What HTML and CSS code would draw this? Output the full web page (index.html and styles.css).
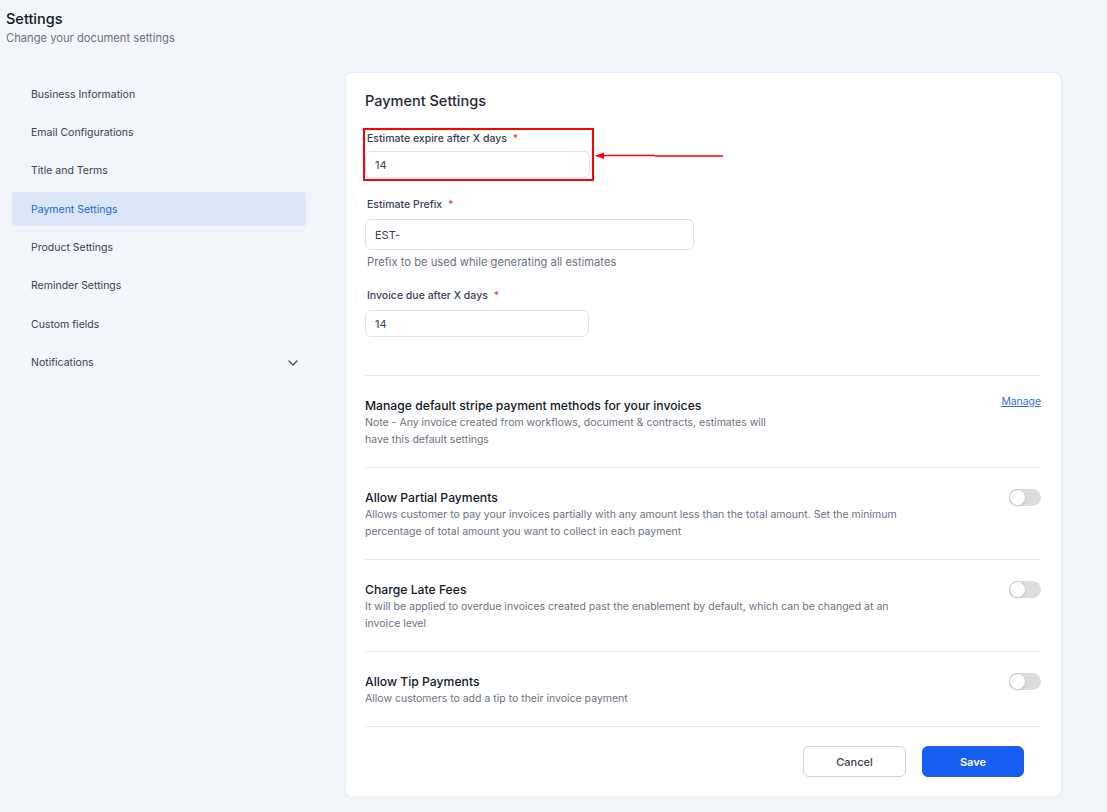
FILE: index.html
```html
<!DOCTYPE html>
<html lang="en">
<head>
  <meta charset="UTF-8" />
  <meta name="viewport" content="width=device-width, initial-scale=1" />
  <title>Settings</title>
  <link rel="stylesheet" href="styles.css">
</head>
<body>
  <header class="page-head">
    <h1>Settings</h1>
    <p>Change your document settings</p>
  </header>

  <div class="layout">
    <nav class="side">
      <a class="side-item">Business Information</a>
      <a class="side-item">Email Configurations</a>
      <a class="side-item">Title and Terms</a>
      <a class="side-item active">Payment Settings</a>
      <a class="side-item">Product Settings</a>
      <a class="side-item">Reminder Settings</a>
      <a class="side-item">Custom fields</a>
      <a class="side-item">Notifications
        <svg class="chev" width="10" height="6" viewBox="0 0 10 6"><path d="M1 1l4 4 4-4" fill="none" stroke="#4b5563" stroke-width="1.4" stroke-linecap="round" stroke-linejoin="round"/></svg>
      </a>
    </nav>

    <main class="card">
      <div class="form">
        <h2>Payment Settings</h2>

        <div class="field marked">
          <label>Estimate expire after X days <span class="req">*</span></label>
          <input class="input in-1" value="14">
          <svg class="arrow" width="130" height="10" viewBox="0 0 130 10"><path d="M8 4.5H60M60 5H128" stroke="#ff0000" stroke-width="1.6"/><path d="M0 4.7L9 1.5V8Z" fill="#ff0000"/></svg>
        </div>

        <div class="field">
          <label>Estimate Prefix <span class="req">*</span></label>
          <input class="input in-2" value="EST-">
          <p class="help">Prefix to be used while generating all estimates</p>
        </div>

        <div class="field">
          <label>Invoice due after X days <span class="req">*</span></label>
          <input class="input in-3" value="14">
        </div>
      </div>

      <section class="row">
        <div class="row-text">
          <h3>Manage default stripe payment methods for your invoices</h3>
          <p class="note">Note - Any invoice created from workflows, document &amp; contracts, estimates will have this default settings</p>
        </div>
        <a class="manage" href="#">Manage</a>
      </section>

      <section class="row">
        <div class="row-text">
          <h3>Allow Partial Payments</h3>
          <p>Allows customer to pay your invoices partially with any amount less than the total amount. Set the minimum percentage of total amount you want to collect in each payment</p>
        </div>
        <span class="toggle"></span>
      </section>

      <section class="row">
        <div class="row-text">
          <h3>Charge Late Fees</h3>
          <p>It will be applied to overdue invoices created past the enablement by default, which can be changed at an invoice level</p>
        </div>
        <span class="toggle"></span>
      </section>

      <section class="row">
        <div class="row-text">
          <h3>Allow Tip Payments</h3>
          <p>Allow customers to add a tip to their invoice payment</p>
        </div>
        <span class="toggle"></span>
      </section>

      <div class="actions">
        <button class="btn cancel">Cancel</button>
        <button class="btn save">Save</button>
      </div>
    </main>
  </div>
</body>
</html>
```

FILE: styles.css
```css
* { box-sizing: border-box; }
body { margin: 0; font-family: Inter, "Noto Sans", sans-serif; background: #f2f6fa; color: #111827; }

.page-head { padding: 10px 6px 0; }
.page-head h1 { margin: 0; font-size: 14.5px; font-weight: 500; line-height: 18px; color: #111827; }
.page-head p { margin: 2px 0 0; font-size: 11.2px; line-height: 16px; color: #6b7280; }

.layout { display: flex; align-items: flex-start; padding: 27px 0 0 12px; }

.side { width: 294px; display: flex; flex-direction: column; gap: 4.4px; margin-top: 4px; }
.side-item { height: 34px; display: flex; align-items: center; justify-content: space-between; padding: 0 8px 0 19px; font-size: 10.5px; color: #374151; border-radius: 3px; }
.side-item.active { background: #dbe7f8; color: #1f5fe0; }
.chev { margin-top: 1px; }

.card { width: 715px; margin-left: 40px; background: #fff; border-radius: 6px; box-shadow: 0 0 0 1px #e6ebf1, 0 1px 3px rgba(16,24,40,0.08); padding: 0 20px 19px 19px; }

.form { padding: 19px 0 38px; }
.form h2 { margin: 0 0 20px; font-size: 14.5px; font-weight: 500; line-height: 18px; color: #1f2937; }

.field { position: relative; margin-bottom: 19px; }
.field label { display: block; font-size: 10.5px; font-weight: 500; line-height: 14px; color: #374151; padding-left: 2px; margin-bottom: 7px; }
.req { color: #ef4444; margin-left: 3px; }
.marked { width: 227px; padding: 2px 0 1px; outline: 2px solid #ff0000; margin-bottom: 19px; }
.marked label { margin-bottom: 5px; }
.arrow { position: absolute; left: 230px; top: 21px; }

.input { display: block; border: 1px solid #dde2e8; border-radius: 6px; font-family: inherit; font-size: 11px; color: #374151; padding: 0 9px; background: #fff; }
.in-1 { width: 225px; height: 27px; }
.in-2 { width: 329px; height: 31px; }
.in-3 { width: 224px; height: 27px; }
.help { margin: 4px 0 0 2px; font-size: 11.2px; line-height: 16px; color: #6b7280; }
.field:last-child { margin-bottom: 0; }

.row { display: flex; justify-content: space-between; align-items: flex-start; border-top: 1px solid #e6e8eb; padding: 21px 0 19px; }
.row h3 { margin: 0; font-size: 12.2px; font-weight: 500; line-height: 17px; color: #111827; }
.row p { margin: 0; font-size: 10.5px; line-height: 17px; color: #6b7280; max-width: 540px; }
.row p.note { max-width: 410px; }
.manage { font-size: 10.4px; color: #2f6fe4; text-decoration: underline; margin-top: -2px; }
.toggle { position: relative; width: 32px; height: 17px; border-radius: 9px; background: #dcdcdc; }
.toggle::after { content: ""; position: absolute; left: 0; top: 0; width: 17px; height: 17px; border-radius: 50%; background: #fff; box-shadow: 0 0 0 1px #c8c8c8 inset, 0 1px 1px rgba(0,0,0,0.1); }

.actions { display: flex; justify-content: flex-end; gap: 16px; border-top: 1px solid #e6e8eb; padding: 19px 17px 0 0; }
.btn { width: 103px; height: 31px; border-radius: 6px; font-family: inherit; font-size: 11px; font-weight: 500; cursor: pointer; }
.cancel { background: #fff; border: 1px solid #d0d5dd; color: #374151; }
.save { width: 102px; background: #155eef; border: 1px solid #155eef; color: #fff; font-weight: 600; }
```
